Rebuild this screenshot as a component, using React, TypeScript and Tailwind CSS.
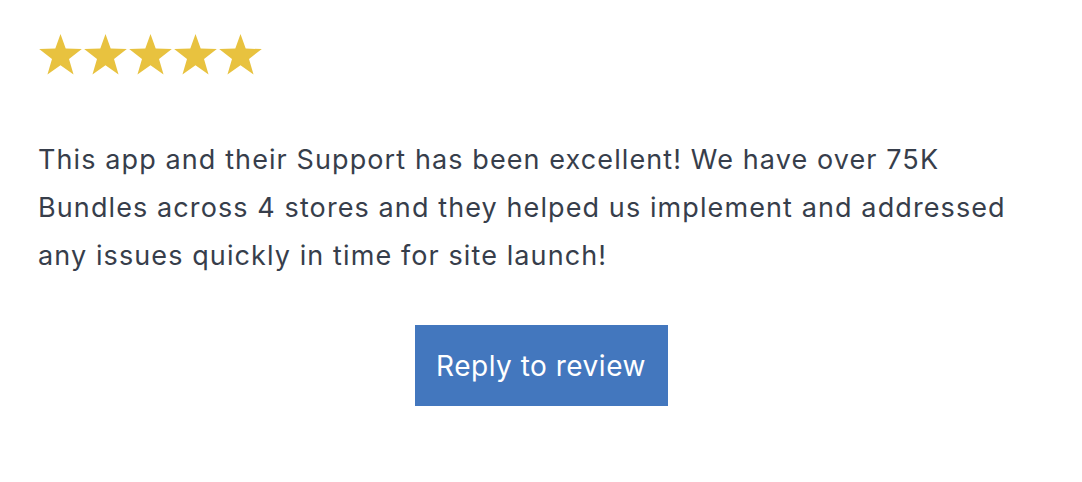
import React from "react";

function Star() {
  return (
    <svg width="45" height="43" viewBox="0 0 24 23" className="block">
      <path
        d="M12 0.5 L14.78 8.33 L23.4 8.6 L16.55 13.9 L18.98 22.2 L12 17.3 L5.02 22.2 L7.45 13.9 L0.6 8.6 L9.22 8.33 Z"
        fill="#E8C23F"
      />
    </svg>
  );
}

export default function App() {
  return (
    <div className="w-[1082px] h-[482px] bg-white overflow-hidden" style={{ fontFamily: "Inter, 'Noto Sans', sans-serif" }}>
      <div className="pl-[38px] pt-[33px]">
        <div className="flex">
          <Star />
          <Star />
          <Star />
          <Star />
          <Star />
        </div>
        <p className="mt-[60px] w-[1020px] text-[27px] leading-[48px] text-[#373e4b] tracking-[1.1px]">
          This app and their Support has been excellent! We have over 75K Bundles across 4 stores and they helped us implement and addressed any issues quickly in time for site launch!
        </p>
      </div>
      <div className="flex justify-center mt-[45px]">
        <button className="w-[253px] h-[81px] bg-[#4377BE] text-white text-[28px] tracking-[0.5px]">
          Reply to review
        </button>
      </div>
    </div>
  );
}
